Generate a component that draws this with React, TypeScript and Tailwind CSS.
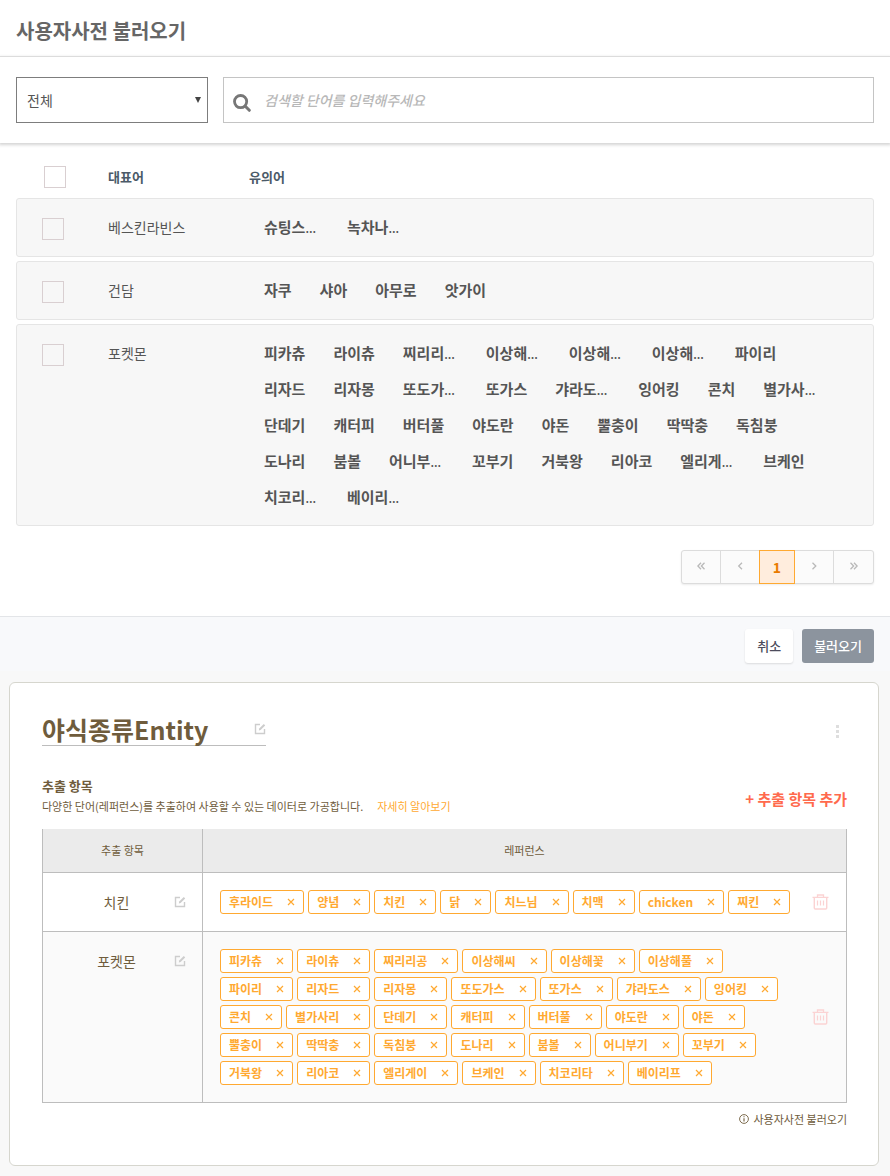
import React from "react";

type DictionaryRow = { name: string; words: string[] };

const dictionary: DictionaryRow[] = [
  { name: "베스킨라빈스", words: ["슈팅스...", "녹차나..."] },
  { name: "건담", words: ["자쿠", "샤아", "아무로", "앗가이"] },
  {
    name: "포켓몬",
    words: [
      "피카츄", "라이츄", "찌리리...", "이상해...", "이상해...", "이상해...", "파이리",
      "리자드", "리자몽", "또도가...", "또가스", "갸라도...", "잉어킹", "콘치", "별가사...",
      "단데기", "캐터피", "버터풀", "야도란", "야돈", "뿔충이", "딱딱충", "독침붕",
      "도나리", "붐볼", "어니부...", "꼬부기", "거북왕", "리아코", "엘리게...", "브케인",
      "치코리...", "베이리...",
    ],
  },
];

const entities: DictionaryRow[] = [
  { name: "치킨", words: ["후라이드", "양념", "치킨", "닭", "치느님", "치맥", "chicken", "찌킨"] },
  {
    name: "포켓몬",
    words: [
      "피카츄", "라이츄", "찌리리공", "이상해씨", "이상해꽃", "이상해풀",
      "파이리", "리자드", "리자몽", "또도가스", "또가스", "갸라도스", "잉어킹",
      "콘치", "별가사리", "단데기", "캐터피", "버터풀", "야도란", "야돈",
      "뿔충이", "딱딱충", "독침붕", "도나리", "붐볼", "어니부기", "꼬부기",
      "거북왕", "리아코", "엘리게이", "브케인", "치코리타", "베이리프",
    ],
  },
];

function SearchIcon() {
  return (
    <svg viewBox="0 0 18 18" className="size-[18px] shrink-0" fill="none" stroke="#777" aria-hidden="true">
      <circle cx="7.6" cy="7.6" r="6.1" strokeWidth="2.8" />
      <path d="M12.3 12.3l4 4" strokeWidth="3" strokeLinecap="round" />
    </svg>
  );
}

function EditIcon() {
  return (
    <svg viewBox="0 0 12 12" className="size-3" fill="none" stroke="#cdcdcd" aria-hidden="true">
      <path d="M6 1.5H1.5v9h9V6" strokeWidth="1.4" />
      <path d="M4.8 7.4l.4-1.9L9.8 1l1.4 1.4-4.6 4.6z" fill="#cdcdcd" stroke="none" />
    </svg>
  );
}

function TrashIcon() {
  return (
    <svg viewBox="0 0 17 16" className="h-4 w-[17px]" fill="none" stroke="#fbd3d3" aria-hidden="true">
      <path d="M.5 3.3h16M5.5 3V1h6v2" strokeWidth="1.3" />
      <path d="M2.3 3.5V14q0 1 1 1h10.4q1 0 1-1V3.5" strokeWidth="1.4" />
      <path d="M5.5 6.500v5M8.500 6.500v5M11.500 6.500v5" strokeWidth="1.2" />
    </svg>
  );
}

function Chevron({ d }: { d: string }) {
  return (
    <svg viewBox="0 0 8 8" className="mx-auto mb-0.5 size-2" fill="none" stroke="#b9b9b9" strokeWidth="1.3" aria-hidden="true">
      <path d={d} />
    </svg>
  );
}

function Word({ text }: { text: string }) {
  const cut = text.endsWith("...");
  return (
    <li className={cut ? "w-[55px] whitespace-nowrap" : "whitespace-nowrap"}>
      {cut ? text.slice(0, -3) : text}
      {cut && <span className="text-xs font-medium leading-none">...</span>}
    </li>
  );
}

function Chip({ label }: { label: string }) {
  return (
    <li className="flex h-6 items-center gap-3.5 rounded-[3px] border border-[#ffa931] bg-white px-2 text-xs font-bold text-[#ffa931]">
      <span className="leading-5">{label}</span>
      <button type="button" aria-label={`${label} 삭제`}>
        <svg viewBox="0 0 8 8" className="size-2" fill="none" stroke="#ffa931" strokeWidth="1.2">
          <path d="M1 1l6 6M7 1L1 7" />
        </svg>
      </button>
    </li>
  );
}

const checkboxClass = "block size-[22px] appearance-none border border-[#d9cfd1] checked:bg-[#d9cfd1]";
const pageClass = "h-full w-[39px] border-r border-[#dcdcdc]";

export default function App() {
  return (
    <div className="min-h-screen bg-[#f8f8f8] font-['Noto_Sans_CJK_KR','Noto_Sans',sans-serif] text-[#555]">
      <section className="bg-white">
        <header className="flex h-[57px] items-center border-b border-[#e0e0e0] px-4 pt-1.5">
          <h1 className="text-xl font-bold leading-7 text-[#666]">사용자사전 불러오기</h1>
        </header>

        <div className="flex gap-[15px] px-4 py-5 shadow-[0_1px_3px_1px_#d4d4d4]">
          <div className="relative w-48">
            <select
              aria-label="분류"
              className="h-[46px] w-full appearance-none border border-[#7d7d7d] bg-white px-2.5 text-sm text-[#555]"
            >
              <option>전체</option>
            </select>
            <svg viewBox="0 0 6 6" className="pointer-events-none absolute right-[7px] top-5 size-1.5" aria-hidden="true">
              <path d="M0 0h6L3 6z" fill="#444" />
            </svg>
          </div>
          <label className="flex h-[46px] flex-1 items-center gap-[13px] border border-[#c4c4c4] bg-white px-[9px]">
            <span className="pt-1.5"><SearchIcon /></span>
            <input
              type="text"
              aria-label="단어 검색"
              placeholder="검색할 단어를 입력해주세요"
              className="min-w-0 flex-1 text-sm font-medium italic outline-none placeholder:text-[#b8b8b8]"
            />
          </label>
        </div>

        <div className="px-4 pb-8 pt-[23px]">
          <div className="flex items-center pb-2.5 pl-7 text-[13px] font-bold leading-5 text-[#4b5a68]">
            <input type="checkbox" aria-label="전체 선택" className={checkboxClass} />
            <span className="ml-[42px] w-[141px]">대표어</span>
            <span>유의어</span>
          </div>

          <ul className="flex flex-col gap-1">
            {dictionary.map((row, i) => (
              <li
                key={row.name}
                className="flex min-h-[59px] items-start rounded-[3px] border border-[#e5e5e5] bg-[#f7f7f7] pb-2.5 pl-[25px] pr-10 pt-2.5"
              >
                <input id={`row-${i}`} type="checkbox" className={`${checkboxClass} mt-[9px] shrink-0`} />
                <label htmlFor={`row-${i}`} className="ml-11 w-[156px] shrink-0 text-sm leading-9">
                  {row.name}
                </label>
                <ul className="flex flex-1 flex-wrap gap-x-7 text-[15px] font-bold leading-9">
                  {row.words.map((word, j) => <Word key={j} text={word} />)}
                </ul>
              </li>
            ))}
          </ul>

          <nav aria-label="페이지" className="mt-6 flex justify-end">
            <div className="flex h-[34px] rounded-[3px] border border-[#dcdcdc] bg-[#fbfbfb] text-sm leading-5 shadow-[0_1px_2px_rgba(0,0,0,0.08)]">
              <button type="button" aria-label="처음" className={pageClass}><Chevron d="M4 .8L.9 4 4 7.200M7.500 .8L4.400 4l3.100 3.200" /></button>
              <button type="button" aria-label="이전" className={pageClass}><Chevron d="M6 .8L2.700 4 6 7.200" /></button>
              <button type="button" aria-current="page" className="-my-px -ml-px w-9 border border-[#ffa931] bg-[#ffeddd] font-bold text-[#e97b00]">1</button>
              <button type="button" aria-label="다음" className={pageClass}><Chevron d="M2.500 .8L5.800 4 2.500 7.200" /></button>
              <button type="button" aria-label="마지막" className="h-full w-[39px]"><Chevron d="M.5 .8L3.600 4 .5 7.200M4 .8L7.100 4 4 7.200" /></button>
            </div>
          </nav>
        </div>
      </section>

      <footer className="flex justify-end gap-[9px] border-t border-[#e3e5e8] bg-[#f8f9fb] px-4 pb-2 pt-3 text-[13px] leading-5">
        <button type="button" className="h-[34px] rounded-[3px] bg-white px-3 font-medium text-[#4c4c5c] shadow-[0_1px_2px_rgba(0,0,0,0.12)]">취소</button>
        <button type="button" className="h-[34px] rounded-[3px] bg-[#8c949e] px-3 font-medium text-white">불러오기</button>
      </footer>

      <main className="mb-2.5 ml-[9px] mr-[11px] mt-[11px] rounded-md border border-[#d6d6ce] bg-white pb-9 pl-8 pr-[31px] pt-[30px] text-[#6f5c3c]">
        <div className="flex items-start justify-between">
          <div className="flex w-56 items-center justify-between border-b border-[#bdbdbd]">
            <h2 className="text-[25px] font-bold leading-8">야식종류Entity</h2>
            <button type="button" aria-label="이름 수정"><EditIcon /></button>
          </div>
          <button type="button" aria-label="더보기" className="mr-2 mt-3 flex flex-col gap-0.5">
            <span className="size-[3px] bg-[#dedede]" />
            <span className="size-[3px] bg-[#dedede]" />
            <span className="size-[3px] bg-[#dedede]" />
          </button>
        </div>

        <div className="mt-[30px] flex items-center justify-between">
          <div>
            <h3 className="text-[13px] font-bold leading-5">추출 항목</h3>
            <p className="flex gap-3.5 text-[11px] leading-5">
              다양한 단어(레퍼런스)를 추출하여 사용할 수 있는 데이터로 가공합니다.
              <a href="#more" className="text-[#ffa931]">자세히 알아보기</a>
            </p>
          </div>
          <button type="button" className="pt-1.5 text-[15px] font-bold leading-5 text-[#ff6a4d]">+ 추출 항목 추가</button>
        </div>

        <table className="mt-[13px] w-full border-separate border-spacing-0 border-l border-r border-[#bdbdbd]">
          <thead>
            <tr className="h-11 bg-[#ebebeb] text-[11px]">
              <th scope="col" className="w-40 border-b border-r border-[#bdbdbd] font-normal">추출 항목</th>
              <th scope="col" colSpan={2} className="border-b border-[#bdbdbd] font-normal">레퍼런스</th>
            </tr>
          </thead>
          <tbody>
            {entities.map((row) => (
              <tr key={row.name} className="even:bg-[#fafafa]">
                <td className="border-b border-r border-[#bdbdbd] p-0 py-[17px] align-top">
                  <div className="flex h-6 items-center pr-4">
                    <span className="flex-1 pl-4 text-center text-sm leading-5">{row.name}</span>
                    <button type="button" aria-label={`${row.name} 수정`}><EditIcon /></button>
                  </div>
                </td>
                <td className="border-b border-[#bdbdbd] py-[17px] pl-[17px] pr-0">
                  <ul className="flex flex-wrap gap-1">
                    {row.words.map((word) => <Chip key={word} label={word} />)}
                  </ul>
                </td>
                <td className="w-[51px] border-b border-[#bdbdbd] p-0">
                  <button type="button" aria-label={`${row.name} 삭제`} className="mx-auto block"><TrashIcon /></button>
                </td>
              </tr>
            ))}
          </tbody>
        </table>

        <div className="mt-1.5 flex justify-end">
          <button type="button" className="flex items-center gap-1 text-[11px] leading-5">
            <svg viewBox="0 0 10 10" className="size-2.5" fill="none" stroke="#6f5c3c" aria-hidden="true">
              <circle cx="5" cy="5" r="4.4" strokeWidth="0.9" />
              <path d="M5 4.300v3.200M5 2.300v1" strokeWidth="1.1" />
            </svg>
            사용자사전 불러오기
          </button>
        </div>
      </main>
    </div>
  );
}
